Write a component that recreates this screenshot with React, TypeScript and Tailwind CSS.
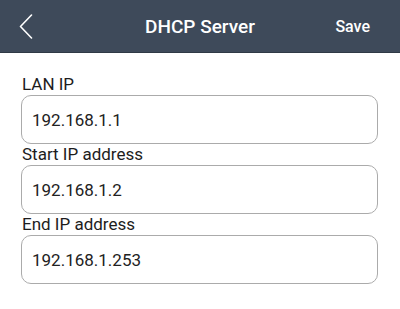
const fields = [
  { label: 'LAN IP', value: '192.168.1.1' },
  { label: 'Start IP address', value: '192.168.1.2' },
  { label: 'End IP address', value: '192.168.1.253' },
];

export default function App() {
  return (
    <div
      className="min-h-[309px] w-full bg-white"
      style={{ fontFamily: 'Roboto, "Liberation Sans", sans-serif' }}
    >
      <header className="relative flex h-[53px] items-center justify-center border-b border-[#2f3a46] bg-[#3e4a5a] text-white">
        <button className="absolute left-[18px] top-[14px] flex h-[25px] w-[15px] items-center justify-center">
          <svg width="14" height="25" viewBox="0 0 14 25" fill="none">
            <path
              d="M12.5 1L1.5 12.5L12.5 24"
              stroke="white"
              strokeWidth="1.6"
              strokeLinecap="round"
              strokeLinejoin="round"
            />
          </svg>
        </button>
        <h1 className="pt-[1px] text-[19px] font-medium leading-none">
          DHCP Server
        </h1>
        <button className="absolute right-[30px] top-[18px] text-[16px] font-medium leading-[18px]">
          Save
        </button>
      </header>

      <div className="pl-[21px] pr-[22px] pt-[21px]">
        {fields.map((f) => (
          <div key={f.label}>
            <label className="block pl-[1px] text-[17px] leading-[21px] text-[#1d1d1d]">
              {f.label}
            </label>
            <input
              readOnly
              defaultValue={f.value}
              className="block h-[49px] w-full rounded-[10px] border border-[#ababab] bg-white px-[10px] text-[17px] text-[#222222] outline-none"
              style={{ fontFamily: 'Roboto, "Liberation Sans", sans-serif' }}
            />
          </div>
        ))}
      </div>
    </div>
  );
}
